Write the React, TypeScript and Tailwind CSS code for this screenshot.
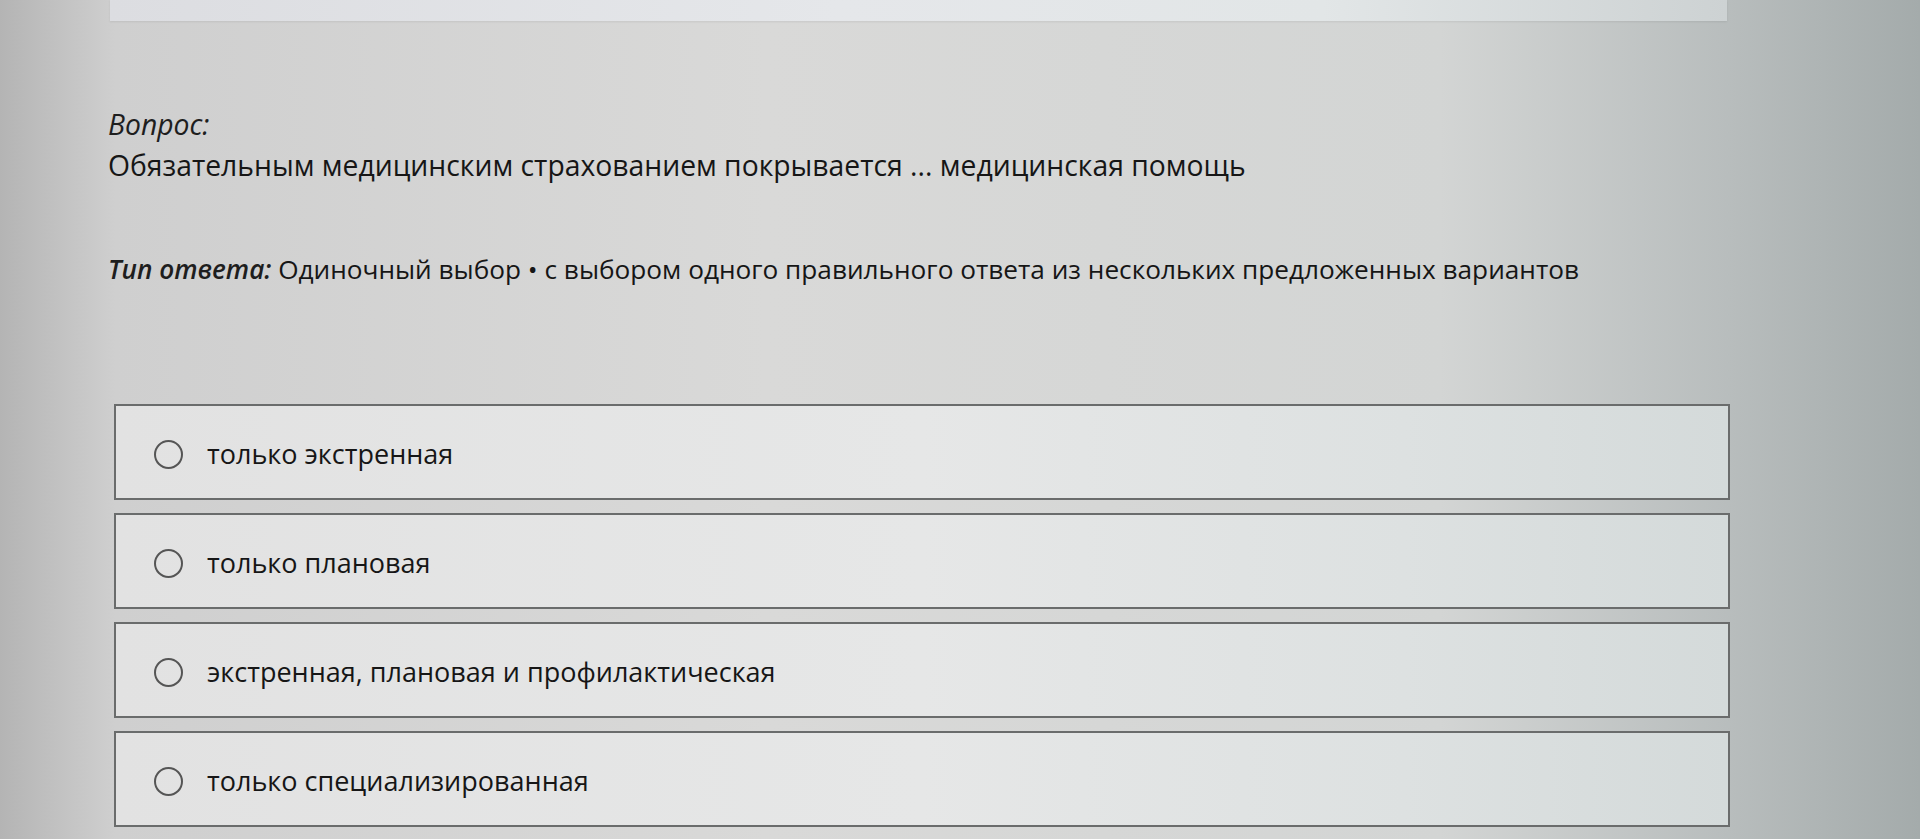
const OPTIONS = [
  'только экстренная',
  'только плановая',
  'экстренная, плановая и профилактическая',
  'только специализированная',
];

export default function App() {
  return (
    <div
      className="w-full h-[839px] overflow-hidden bg-[linear-gradient(90deg,#b4b4b4_0%,#cfcfcf_6%,#d9d9d8_40%,#d3d5d4_75%,#b8bdbd_90%,#a4abab_100%)] text-[#161616]"
      style={{ fontFamily: '"Open Sans", "Noto Sans", sans-serif' }}
    >
      {/* Top card edge */}
      <div className="ml-[110px] w-[1617px] h-[21px] bg-[linear-gradient(90deg,#dcdde1_0%,#e5e7ea_45%,#e2e6e7_75%,#cdd2d3_100%)] shadow-[0_1px_2px_rgba(0,0,0,0.08)]" />

      <div className="pl-[108px] pr-[190px]">
        {/* Question */}
        <p className="mt-[85px] text-[28.3px] leading-[36px] italic text-[#1e1e1e]">Вопрос:</p>
        <p className="mt-[5px] text-[28.3px] leading-[36px]">
          Обязательным медицинским страхованием покрывается ... медицинская помощь
        </p>

        {/* Answer type */}
        <p className="mt-[68px] text-[26.2px] leading-[36px]">
          <span className="italic font-semibold text-[#1e1e1e]">Тип ответа:</span> Одиночный выбор • с выбором одного правильного ответа из нескольких предложенных вариантов
        </p>

        {/* Options */}
        <div className="mt-[117px] ml-[6px] flex flex-col gap-[13px]">
          {OPTIONS.map((o) => (
            <label
              key={o}
              className="h-[96px] flex items-center gap-[24px] pl-[38px] pt-[4px] border-2 border-[#6a6c6c] bg-[linear-gradient(90deg,#e2e2e2_0%,#e6e7e7_50%,#dde1e1_80%,#d4dada_100%)]"
            >
              <span className="w-[29px] h-[29px] rounded-full border-2 border-[#555] shrink-0" />
              <span className="text-[27px] leading-[36px]">{o}</span>
            </label>
          ))}
        </div>
      </div>
    </div>
  );
}
